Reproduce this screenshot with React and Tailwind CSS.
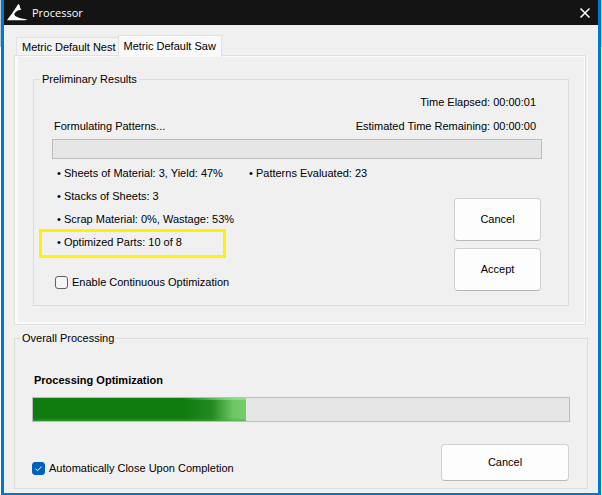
import { useState } from 'react';

const tabs = ['Metric Default Nest', 'Metric Default Saw'];

const results = [
  ['Sheets of Material: 3, Yield: 47%', 'Patterns Evaluated: 23'],
  ['Stacks of Sheets: 3'],
  ['Scrap Material: 0%, Wastage: 53%'],
  ['Optimized Parts: 10 of 8'],
];

function Logo() {
  return (
    <svg viewBox="0 0 63 51" className="h-[17px] w-[21px]" aria-hidden="true">
      <path d="M34 0 L38 4 L39 11 L43 17 C31 18 22 25 22 31 C22 38 36 43 62 47 C52 49 38 49 22 49 L0 49 C5 41 9 36 14 30 Z" fill="#fff" />
    </svg>
  );
}

function ProgressBar({ value, label, className }) {
  return (
    <div
      role="progressbar"
      aria-label={label}
      aria-valuenow={value}
      className={`border border-[#bcbcbc] bg-[#e6e6e6] ${className}`}
    >
      {value > 0 && (
        <div
          className="relative h-full bg-[linear-gradient(90deg,#107c10_72%,#248a22_84%,#6cc664_94%,#76cd6e)]"
          style={{ width: `${value}%` }}
        >
          <div className="absolute inset-x-0 top-0 h-0.5 bg-linear-to-r from-transparent from-70% to-[#8fe287]" />
          <div className="absolute inset-x-0 bottom-0 h-[3px] bg-linear-to-t from-[#4aa544]/60 to-transparent" />
        </div>
      )}
    </div>
  );
}

function Button({ children, className }) {
  return (
    <button className={`rounded-[4px] border border-[#d0d0d0] border-b-[#b8b8b8] bg-[#fdfdfd] text-center ${className}`}>
      {children}
    </button>
  );
}

function Checkbox({ label, checked, onChange }) {
  return (
    <label className="flex h-4 items-center gap-1">
      <span className="relative flex size-[13px]">
        <input
          type="checkbox"
          checked={checked}
          onChange={e => onChange(e.target.checked)}
          className="size-[13px] appearance-none rounded-[3px] border border-[#626262] bg-[#f5f5f5] checked:border-[#005fb8] checked:bg-[#005fb8]"
        />
        {checked && (
          <svg viewBox="0 0 13 13" className="pointer-events-none absolute inset-0" fill="none" stroke="#fff" aria-hidden="true">
            <path d="M3.5 6.7 L5.5 8.7 L9.6 4.6" />
          </svg>
        )}
      </span>
      {label}
    </label>
  );
}

export default function App() {
  const [active, setActive] = useState(1);
  const [continuous, setContinuous] = useState(false);
  const [autoClose, setAutoClose] = useState(true);

  return (
    <div className="flex min-h-screen bg-[linear-gradient(#b9cbd8_47px,#fff_47px)] px-px font-['Liberation_Sans',Arial,sans-serif] text-[11px] leading-4 text-black">
      <div className="flex-1 border-x-[3px] border-b-2 border-[#0078d0] bg-[#f0f0f0]">
        <header className="flex h-[25px] items-center bg-[#141414] pr-2 pl-[3px] text-white">
          <Logo />
          <h1 className="flex-1 pl-1 font-['Open_Sans',sans-serif] text-[11px]">Processor</h1>
          <button aria-label="Close">
            <svg viewBox="0 0 10 10" className="size-[10px]" fill="none" stroke="#fff" strokeWidth="1.5" aria-hidden="true">
              <path d="M0.5 0.5 L9.5 9.5 M9.5 0.5 L0.5 9.5" />
            </svg>
          </button>
        </header>

        <main className="px-[10px] pt-[10px]">
          <div role="tablist" className="flex items-end pl-0.5">
            {tabs.map((t, i) => (
              <button
                key={t}
                role="tab"
                aria-selected={i === active}
                onClick={() => setActive(i)}
                className={
                  i === active
                    ? 'relative -mb-0.5 h-[22px] border border-b-0 border-[#e2e2e2] bg-[#f9f9f9] px-[5px] pb-0.5'
                    : 'h-[18px] border border-r-0 border-b-0 border-[#e2e2e2] bg-[#f3f3f3] pr-0.5 pl-[5px]'
                }
              >
                {t}
              </button>
            ))}
          </div>

          <div className="bg-[#f5f5f5] pr-0.5">
            <div className="border border-[#e0e0e0] bg-[#fafafa] pt-px pr-px pb-0.5 pl-[3px]">
              <div className="bg-[#f0f0f0] px-[15px] pt-[14px] pb-4">
                <fieldset className="border border-[#dcdcdc] pr-[26px] pb-[14px] pl-[18px]">
                  <legend className="-ml-3 px-0.5">Preliminary Results</legend>
                  <p className="mt-[7px] pr-[6px] text-right">Time Elapsed: 00:00:01</p>
                  <div className="mt-2 flex justify-between pr-[6px] pl-0.5">
                    <p>Formulating Patterns...</p>
                    <p>Estimated Time Remaining: 00:00:00</p>
                  </div>
                  <ProgressBar value={0} label="Formulating Patterns" className="mt-[5px] h-5" />

                  <div className="mt-[3px] flex justify-between">
                    <div>
                      <ul className="pl-[5px] leading-[23px]">
                        {results.map(([text, extra], i) => (
                          <li key={text} className="relative flex">
                            <span className="w-48">• {text}</span>
                            {extra && <span>• {extra}</span>}
                            {i === results.length - 1 && (
                              <span className="absolute -top-0.5 -left-[18px] h-[29px] w-[187px] border-[3px] border-[#fff200]" />
                            )}
                          </li>
                        ))}
                      </ul>
                      <div className="mt-5 pl-[3px]">
                        <Checkbox label="Enable Continuous Optimization" checked={continuous} onChange={setContinuous} />
                      </div>
                    </div>
                    <div className="flex flex-col gap-[7px] pt-9 pr-px">
                      <Button className="h-[43px] w-[87px] pb-0.5">Cancel</Button>
                      <Button className="h-[43px] w-[87px] pb-0.5">Accept</Button>
                    </div>
                  </div>
                </fieldset>
              </div>
            </div>
          </div>

          <fieldset className="mt-[5px] border border-[#dcdcdc] px-[17px] pb-[7px]">
            <legend className="-ml-3 px-0.5">Overall Processing</legend>
            <p className="mt-[26px] pl-0.5 font-bold">Processing Optimization</p>
            <ProgressBar value={39.7} label="Processing Optimization" className="mt-[9px] h-[25px]" />
            <div className="mt-[22px] flex items-end justify-between pr-px">
              <div className="pb-[5px]">
                <Checkbox label="Automatically Close Upon Completion" checked={autoClose} onChange={setAutoClose} />
              </div>
              <Button className="h-[37px] w-32 pb-0.5">Cancel</Button>
            </div>
          </fieldset>
        </main>
      </div>
    </div>
  );
}
